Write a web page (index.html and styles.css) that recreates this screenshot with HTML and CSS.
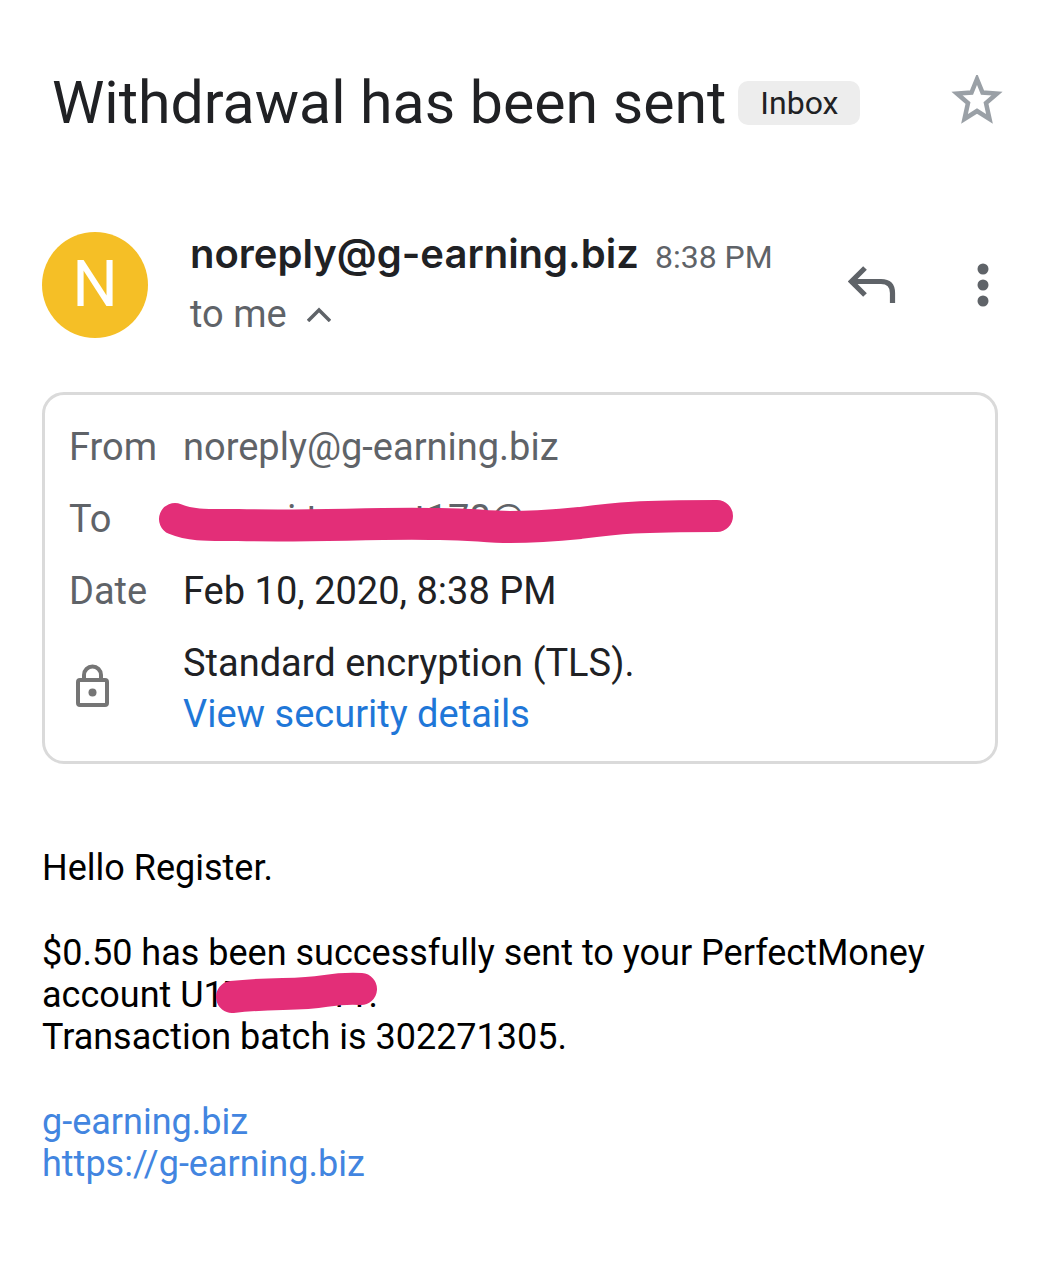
FILE: index.html
```
<!DOCTYPE html>
<html lang="en">
<head>
    <meta charset="UTF-8">
    <meta name="viewport" content="width=device-width, initial-scale=1.0">
    <title>Withdrawal has been sent</title>
    <link rel="stylesheet" href="styles.css">
</head>
<body>
    <main class="mail">
        <header class="subject">
            <h1>Withdrawal has been sent</h1>
            <button class="label">Inbox</button>
            <button class="icon-btn star" aria-label="Star">
                <svg width="52" height="56" viewBox="0 0 52 56"><path d="M26 4 31.500 17.500 46 18.500 35 28 38.500 44 26 36 13.500 44 17 28 6 18.500 20.500 17.500Z" fill="none" stroke="#9aa0a6" stroke-width="4.500"/></svg>
            </button>
        </header>

        <section class="sender">
            <div class="avatar">N</div>
            <div class="who">
                <div class="from-line">
                    <span class="name">noreply@g-earning.biz</span>
                    <time class="time">8:38 PM</time>
                </div>
                <button class="recipients">to me
                    <svg width="24" height="16" viewBox="0 0 24 16"><path d="M1 15 12 4l11 11" fill="none" stroke="#5f6368" stroke-width="3.500"/></svg>
                </button>
            </div>
            <button class="icon-btn" aria-label="Reply">
                <svg width="50" height="38" viewBox="0 0 50 38"><path d="M17 2 3.500 15.500l13.500 13.500M3 15.500h30q11.500 0 11.500 11.500v10" fill="none" stroke="#5f6368" stroke-width="5.200"/></svg>
            </button>
            <button class="icon-btn more" aria-label="More options">
                <svg width="12" height="44" viewBox="0 0 12 44" fill="#5f6368"><circle cx="6" cy="6" r="5.500"/><circle cx="6" cy="22" r="5.500"/><circle cx="6" cy="38" r="5.500"/></svg>
            </button>
        </section>

        <section class="details">
            <span class="key">From</span>
            <span class="muted">noreply@g-earning.biz</span>
            <span class="key">To</span>
            <span class="muted hidden-address">
                <span class="peek">i t</span><span>t178@</span>
                <svg class="marker" width="576" height="46" viewBox="0 0 576 46"><path d="M17 20C34 27 50 26 80 26C150 28 210 24 272 25C310 24 324 28 352 28C380 28 402 26 422 24C460 19 480 17 559 17" fill="none" stroke="#e32e78" stroke-width="32" stroke-linecap="round" stroke-linejoin="round"/></svg>
            </span>
            <span class="key">Date</span>
            <span>Feb 10, 2020, 8:38 PM</span>
            <svg class="lock" width="34" height="50" viewBox="0 0 34 50"><rect x="2" y="16" width="29" height="25" rx="2" fill="none" stroke="#757575" stroke-width="4"/><path d="M8 16v-5a8.500 8.500 0 0 1 17 0v5" fill="none" stroke="#757575" stroke-width="4"/><circle cx="16.500" cy="28.500" r="4" fill="#757575"/></svg>
            <span class="security">
                <span>Standard encryption (TLS).</span>
                <a href="#">View security details</a>
            </span>
        </section>

        <article class="body">
            <p>Hello Register.</p>
            <p>
                $0.50 has been successfully sent to your PerfectMoney<br>
                account U1<span class="account">7<span>11.</span>
                    <svg class="marker" width="164" height="42" viewBox="0 0 164 42"><path d="M17 25C60 20 80 24 110 19Q130 16 146 17" fill="none" stroke="#e32e78" stroke-width="32" stroke-linecap="round"/></svg>
                </span><br>
                Transaction batch is 302271305.
            </p>
            <p>
                <a href="#">g-earning.biz</a><br>
                <a href="#">https://g-earning.biz</a>
            </p>
        </article>
    </main>
</body>
</html>
```

FILE: styles.css
```
* {
    box-sizing: border-box;
}

body {
    margin: 0;
    background: #fff;
    color: #202124;
    font-family: Roboto, sans-serif;
    font-size: 38px;
}

button {
    border: none;
    background: none;
    padding: 0;
    font: inherit;
    color: inherit;
    cursor: pointer;
}

svg {
    display: block;
}

a {
    color: #1f77d8;
    text-decoration: none;
}

.mail {
    padding: 67px 43px 0 42px;
}

/* Subject */
.subject {
    display: flex;
    align-items: center;
    padding-left: 10px;
}

h1 {
    margin: 0;
    font-size: 59px;
    font-weight: 400;
    line-height: 72px;
}

.label {
    margin-left: 12px;
    padding: 0 22px;
    border-radius: 10px;
    background: #ededed;
    font-size: 32px;
    line-height: 44px;
}

.star {
    margin-left: auto;
    margin-right: -5px;
}

/* Sender */
.sender {
    display: flex;
    align-items: center;
    margin-top: 87px;
}

.avatar {
    width: 106px;
    height: 106px;
    border-radius: 50%;
    background: #f5bf26;
    color: #fff;
    font-size: 64px;
    line-height: 106px;
    text-align: center;
}

.who {
    flex: 1;
    margin-left: 42px;
}

.from-line {
    display: flex;
    align-items: baseline;
    gap: 16px;
    line-height: 56px;
}

.name {
    font-family: Inter, sans-serif;
    font-size: 40px;
    font-weight: 600;
}

.time {
    color: #5f6368;
    font-size: 32px;
}

.recipients {
    display: flex;
    align-items: center;
    gap: 20px;
    color: #5f6368;
    font-size: 38px;
    line-height: 58px;
}

.more {
    margin-left: 79px;
    margin-right: 9px;
}

/* Details card */
.details {
    display: grid;
    grid-template-columns: 114px 1fr;
    row-gap: 22px;
    margin-top: 49px;
    padding: 27px 24px 21px;
    border: 3px solid #dadada;
    border-radius: 22px;
    line-height: 50px;
}

.key,
.muted {
    color: #5f6368;
}

.hidden-address {
    position: relative;
    padding-left: 104px;
}

.peek {
    margin-right: 96px;
}

.marker {
    position: absolute;
    top: 5px;
    left: -25px;
}

.lock {
    align-self: center;
    margin-left: 7px;
}

.security {
    display: flex;
    flex-direction: column;
    align-items: flex-start;
    line-height: 51px;
}

/* Message */
.body {
    margin-top: 83px;
    color: #000;
    font-size: 36px;
    line-height: 42px;
}

.body p {
    margin: 0 0 43px;
}

.body a {
    color: #4285e0;
}

.account {
    position: relative;
}

.account span {
    margin-left: 84px;
}

.account .marker {
    top: -2px;
    left: -9px;
}
```
